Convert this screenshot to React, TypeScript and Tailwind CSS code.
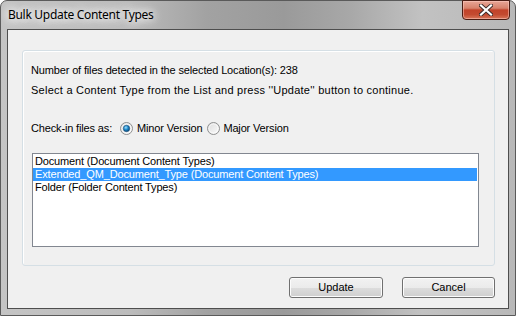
import React, { useState } from 'react';

const items = [
  'Document (Document Content Types)',
  'Extended_QM_Document_Type (Document Content Types)',
  'Folder (Folder Content Types)',
];

const Radio: React.FC<{ checked?: boolean }> = ({ checked }) => (
  <svg width="13" height="13" viewBox="0 0 13 13" className="shrink-0">
    <defs>
      <linearGradient id="rb-bg" x1="0" y1="0" x2="1" y2="1">
        <stop offset="0" stopColor="#dcdcdc" />
        <stop offset="1" stopColor="#fbfbfb" />
      </linearGradient>
      <radialGradient id="rb-dot" cx="0.4" cy="0.35" r="0.7">
        <stop offset="0" stopColor="#9ee0ff" />
        <stop offset="0.5" stopColor="#1a86c8" />
        <stop offset="1" stopColor="#0a3f6a" />
      </radialGradient>
    </defs>
    <circle cx="6.5" cy="6.5" r="6" fill="url(#rb-bg)" stroke="#8e8f8f" />
    <circle cx="6.5" cy="6.5" r="4.5" fill="none" stroke="#ffffff" strokeOpacity="0.6" />
    {checked && <circle cx="6.5" cy="6.5" r="3.2" fill="url(#rb-dot)" stroke="#1c4f7a" strokeWidth="0.6" />}
  </svg>
);

const WinButton: React.FC<{ label: string; w: string }> = ({ label, w }) => (
  <button
    className={`${w} h-[21px] rounded-[3px] border border-[#707070] bg-[linear-gradient(#f2f2f2_0%,#ebebeb_50%,#dddddd_51%,#cfcfcf_100%)] shadow-[inset_0_0_0_1px_#fcfcfc] text-[11px] text-black leading-none`}
  >
    {label}
  </button>
);

const App: React.FC = () => {
  const [selected, setSelected] = useState(1);

  return (
    <div className="w-[516px] h-[316px] overflow-hidden bg-white font-['Liberation_Sans',Arial,sans-serif]">
      <div className="w-[516px] h-[316px] flex flex-col rounded-t-[7px] border border-[#5a5a5a] bg-[linear-gradient(90deg,#c4c4c4_0%,#bcbcbc_25%,#a2a2a2_40%,#9a9a9a_55%,#a8a8a8_68%,#c2c2c2_82%,#b8b8b8_100%)]">
        {/* Title bar */}
        <div className="h-[28px] flex items-start justify-between pl-[7px] pr-[5px]">
          <div className="mt-[5px] text-[12px] leading-[18px] tracking-[-0.3px] text-black font-['Noto_Sans',sans-serif] [text-shadow:0_0_8px_#fff,0_0_10px_#fff,0_0_14px_#fff]">
            Bulk Update Content Types
          </div>
          <div className="-mt-px w-[48px] h-[20px] rounded-b-[4px] border border-[#4a1d14] bg-[linear-gradient(#e8a697_0%,#d7826c_40%,#c2432a_50%,#c34a30_75%,#d8765a_100%)] shadow-[inset_0_0_0_1px_rgba(255,210,200,0.5)] flex items-center justify-center">
            <svg width="14" height="12" viewBox="0 0 14 12">
              <path d="M2 1.5 L12 10.5 M12 1.5 L2 10.5" stroke="#3b2a28" strokeWidth="4" strokeLinecap="square" />
              <path d="M2 1.5 L12 10.5 M12 1.5 L2 10.5" stroke="#ffffff" strokeWidth="2.2" strokeLinecap="square" />
            </svg>
          </div>
        </div>

        {/* Client area */}
        <div className="mx-[6px] w-[502px] h-[280px] border border-[#4e4e4e] bg-[#f0f0f0] flex flex-col">
          <div className="ml-[14px] mt-[20px] w-[473px] h-[216px] rounded-[3px] border border-[#d5dfe5] shadow-[inset_1px_1px_0_#ffffff] pt-[13px] pl-[8px] text-[11px] tracking-[-0.15px] text-black">
            <div className="h-[13px] leading-[13px]">Number of files detected in the selected Location(s): 238</div>
            <div className="mt-[7px] h-[13px] leading-[13px] tracking-[0.25px] whitespace-nowrap">
              Select a Content Type from the List and press ''Update'' button to continue.
            </div>
            <div className="mt-[25px] h-[13px] flex items-center leading-[13px]">
              <span>Check-in files as:</span>
              <span className="ml-[8px]"><Radio checked /></span>
              <span className="ml-[4px]">Minor Version</span>
              <span className="ml-[5px]"><Radio /></span>
              <span className="ml-[3px]">Major Version</span>
            </div>
            <div className="mt-[18px] ml-px w-[447px] h-[94px] border border-[#828790] bg-white py-px pr-px">
              {items.map((item, i) => (
                <div
                  key={item}
                  onClick={() => setSelected(i)}
                  className={`h-[13px] leading-[13px] pl-[2px] ${i === selected ? 'bg-[#3399ff] text-white' : 'text-black'}`}
                >
                  {item}
                </div>
              ))}
            </div>
          </div>

          <div className="mt-[11px] mr-[13px] flex justify-end gap-[19px]">
            <WinButton label="Update" w="w-[94px]" />
            <WinButton label="Cancel" w="w-[93px]" />
          </div>
        </div>
      </div>
    </div>
  );
};

export default App;
